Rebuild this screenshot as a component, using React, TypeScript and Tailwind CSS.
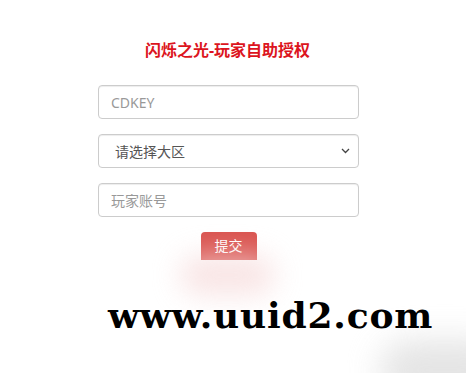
import React from "react";

export default function App() {
  return (
    <div
      className="relative w-full h-[373px] bg-white overflow-hidden"
      style={{ fontFamily: '"Noto Sans", "Noto Sans CJK SC", sans-serif' }}
    >
      <div className="ml-[98px] w-[261px] pt-[39px] flex flex-col">
        <h1 className="text-center text-[16px] leading-[22px] font-bold text-[#dc1420] mb-[24px] -ml-[2px]">
          闪烁之光-玩家自助授权
        </h1>
        <div className="flex flex-col gap-[15px]">
          <input
            className="h-[34px] w-full rounded-[4px] border border-[#cccccc] px-[12px] text-[14px] text-[#555] placeholder:text-[#999] outline-none shadow-[inset_0_1px_1px_rgba(0,0,0,0.075)]"
            placeholder="CDKEY"
          />
          <div className="relative h-[34px] w-full rounded-[4px] border border-[#cccccc] flex items-center pl-[16px] text-[14px] text-[#555] shadow-[inset_0_1px_1px_rgba(0,0,0,0.075)]">
            <span>请选择大区</span>
            <svg
              className="absolute right-[8px] top-[13px]"
              width="9"
              height="6"
              viewBox="0 0 9 6"
              fill="none"
            >
              <path d="M1 1l3.5 3.5L8 1" stroke="#444" strokeWidth="1.3" />
            </svg>
          </div>
          <input
            className="h-[34px] w-full rounded-[4px] border border-[#cccccc] px-[12px] text-[14px] text-[#555] placeholder:text-[#999] outline-none shadow-[inset_0_1px_1px_rgba(0,0,0,0.075)]"
            placeholder="玩家账号"
          />
          <div className="flex justify-center">
            <button className="h-[28px] w-[56px] rounded-t-[4px] bg-[#d9534f] text-white text-[14px] leading-[28px]">
              提交
            </button>
          </div>
        </div>
      </div>
      <div className="absolute left-[180px] top-[255px] w-[95px] h-[40px] rounded-full bg-[#f6dada] blur-[14px] opacity-70" />
      <div className="absolute left-[380px] top-[340px] w-[130px] h-[60px] rounded-full bg-[#dedede] blur-[16px] opacity-80" />
      <div
        className="absolute left-[108px] top-[297px] text-[36px] leading-none font-bold text-black tracking-[0.8px]"
        style={{ fontFamily: '"DejaVu Serif", serif' }}
      >
        www.uuid2.com
      </div>
    </div>
  );
}
